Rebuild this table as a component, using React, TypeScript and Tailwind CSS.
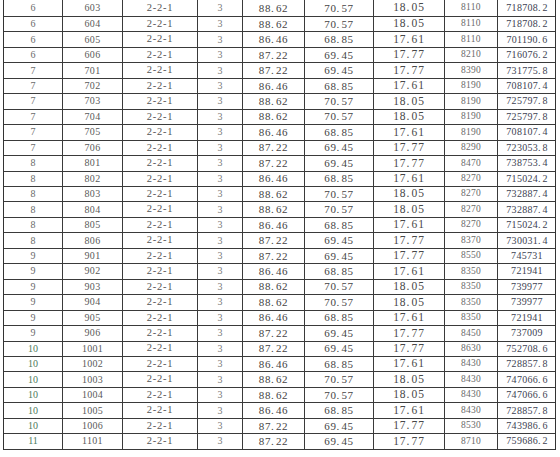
const ROWS: string[][] = [
  ["6", "603", "2-2-1", "3", "88.62", "70.57", "18.05", "8110", "718708.2"],
  ["6", "604", "2-2-1", "3", "88.62", "70.57", "18.05", "8110", "718708.2"],
  ["6", "605", "2-2-1", "3", "86.46", "68.85", "17.61", "8110", "701190.6"],
  ["6", "606", "2-2-1", "3", "87.22", "69.45", "17.77", "8210", "716076.2"],
  ["7", "701", "2-2-1", "3", "87.22", "69.45", "17.77", "8390", "731775.8"],
  ["7", "702", "2-2-1", "3", "86.46", "68.85", "17.61", "8190", "708107.4"],
  ["7", "703", "2-2-1", "3", "88.62", "70.57", "18.05", "8190", "725797.8"],
  ["7", "704", "2-2-1", "3", "88.62", "70.57", "18.05", "8190", "725797.8"],
  ["7", "705", "2-2-1", "3", "86.46", "68.85", "17.61", "8190", "708107.4"],
  ["7", "706", "2-2-1", "3", "87.22", "69.45", "17.77", "8290", "723053.8"],
  ["8", "801", "2-2-1", "3", "87.22", "69.45", "17.77", "8470", "738753.4"],
  ["8", "802", "2-2-1", "3", "86.46", "68.85", "17.61", "8270", "715024.2"],
  ["8", "803", "2-2-1", "3", "88.62", "70.57", "18.05", "8270", "732887.4"],
  ["8", "804", "2-2-1", "3", "88.62", "70.57", "18.05", "8270", "732887.4"],
  ["8", "805", "2-2-1", "3", "86.46", "68.85", "17.61", "8270", "715024.2"],
  ["8", "806", "2-2-1", "3", "87.22", "69.45", "17.77", "8370", "730031.4"],
  ["9", "901", "2-2-1", "3", "87.22", "69.45", "17.77", "8550", "745731"],
  ["9", "902", "2-2-1", "3", "86.46", "68.85", "17.61", "8350", "721941"],
  ["9", "903", "2-2-1", "3", "88.62", "70.57", "18.05", "8350", "739977"],
  ["9", "904", "2-2-1", "3", "88.62", "70.57", "18.05", "8350", "739977"],
  ["9", "905", "2-2-1", "3", "86.46", "68.85", "17.61", "8350", "721941"],
  ["9", "906", "2-2-1", "3", "87.22", "69.45", "17.77", "8450", "737009"],
  ["10", "1001", "2-2-1", "3", "87.22", "69.45", "17.77", "8630", "752708.6"],
  ["10", "1002", "2-2-1", "3", "86.46", "68.85", "17.61", "8430", "728857.8"],
  ["10", "1003", "2-2-1", "3", "88.62", "70.57", "18.05", "8430", "747066.6"],
  ["10", "1004", "2-2-1", "3", "88.62", "70.57", "18.05", "8430", "747066.6"],
  ["10", "1005", "2-2-1", "3", "86.46", "68.85", "17.61", "8430", "728857.8"],
  ["10", "1006", "2-2-1", "3", "87.22", "69.45", "17.77", "8530", "743986.6"],
  ["11", "1101", "2-2-1", "3", "87.22", "69.45", "17.77", "8710", "759686.2"],
];

// per column text look (scan is lighter on the small columns)
const CELL = [
  "w-[59px] text-[10px] text-[#6a6a6a]",
  "w-[60px] text-[10px] tracking-[0.3px] text-[#5a5a5a]",
  "w-[75px] text-[10.5px] tracking-[0.8px] text-[#555]",
  "w-[45px] text-[10px] text-[#777]",
  "w-[62px] text-[11px] tracking-[0.6px] text-[#444]",
  "w-[69px] text-[11px] tracking-[0.6px] text-[#444]",
  "w-[71px] text-[11.5px] tracking-[0.8px] text-[#484848]",
  "w-[53px] text-[9.5px] tracking-[0.3px] text-[#6a6a6a]",
  "w-[58px] text-[10px] tracking-[0.3px] text-[#3d4252] border-r-0",
];

export default function App() {
  return (
    <div className="w-[560px] h-[457px] overflow-hidden bg-white pl-[3px] font-['Liberation_Serif',serif]">
      <div className="w-[553px] border-l border-r border-[#333]">
        {ROWS.map((row, i) => (
          <div key={i} className={`flex border-b border-[#3a3a3a] ${i === 0 ? "h-[17px]" : "h-[15.46px]"}`}>
            {row.map((v, j) => (
              <div
                key={j}
                className={`${CELL[j]} shrink-0 flex items-center justify-center border-r border-[#3a3a3a] leading-none ${
                  j === 0 && i >= 22 ? "!text-[#4d7a5c]" : ""
                }`}
              >
                {v.includes(".") ? (
                  <>
                    {v.split(".")[0]}.<span className="ml-[1.5px]">{v.split(".")[1]}</span>
                  </>
                ) : (
                  v
                )}
              </div>
            ))}
          </div>
        ))}
      </div>
    </div>
  );
}
